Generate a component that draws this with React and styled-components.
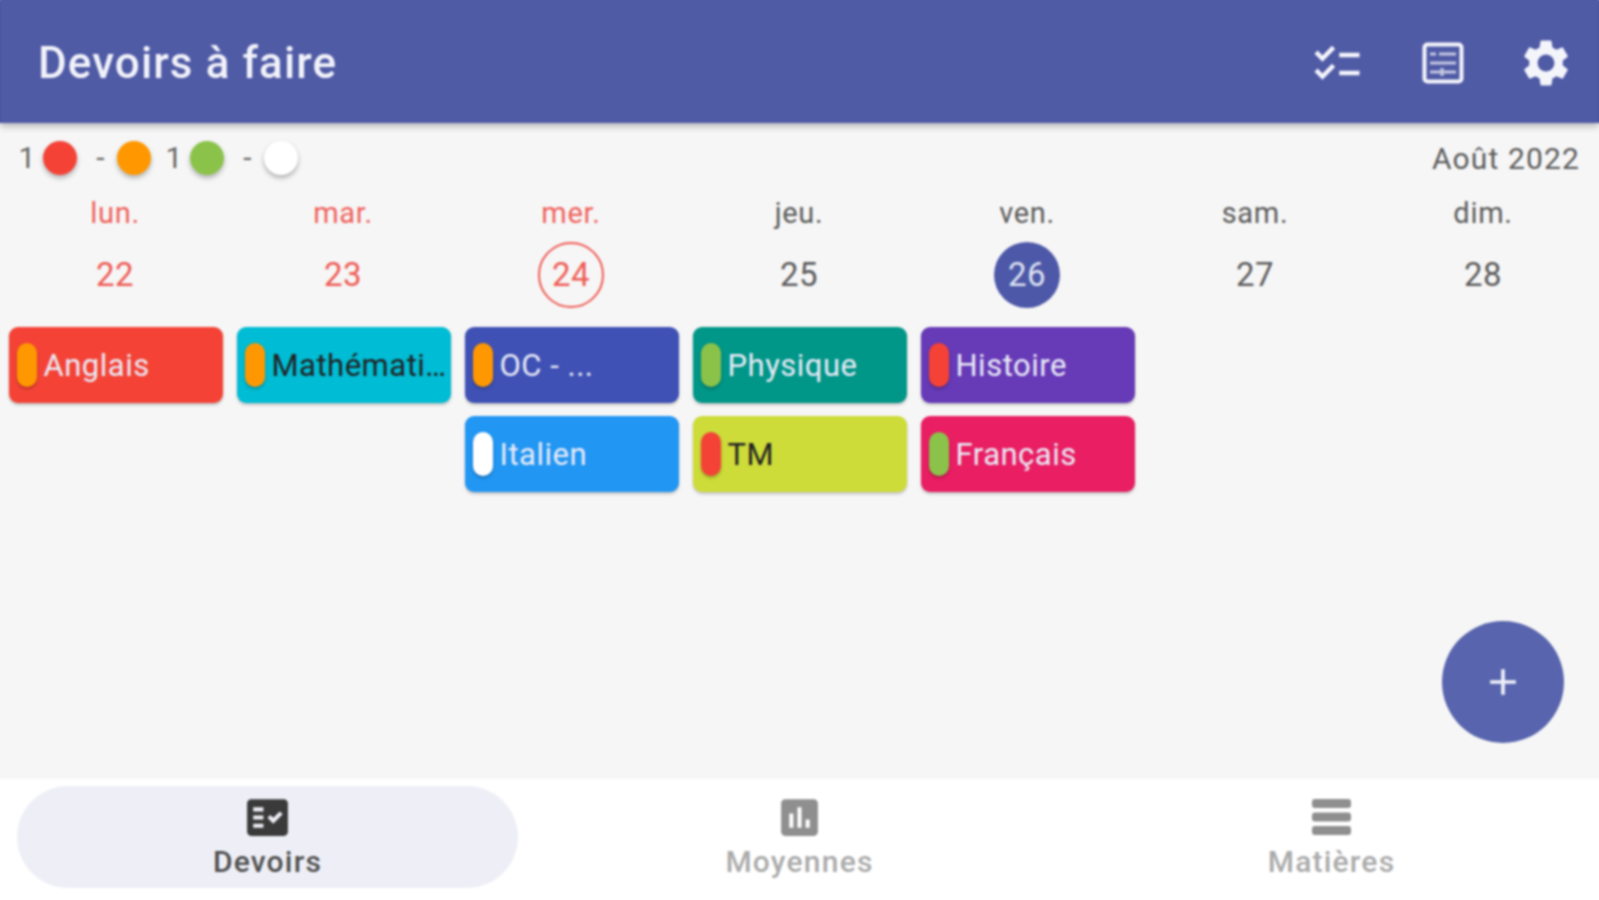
import React from "react";
import styled, { createGlobalStyle } from "styled-components";
import { MdChecklist, MdSettings, MdFactCheck, MdAssessment, MdAdd } from "react-icons/md";

const Global = createGlobalStyle`
  html, body { margin: 0; padding: 0; background: #f6f6f6; }
  body { font-family: Roboto, "Noto Sans", sans-serif; overflow: hidden; height: 900px; }
`;

const Page = styled.div`
  width: 1599px; height: 900px; display: flex; flex-direction: column;
  background: #f6f6f6; filter: blur(0.9px);
`;
const Header = styled.header`
  height: 123px; flex: none; background: #505ba6; display: flex; align-items: center;
  padding: 2px 2px 0 38px; box-sizing: border-box; position: relative; z-index: 2;
  box-shadow: 0 3px 7px rgba(0,0,0,.28), 0 -10px 0 #505ba6, -10px 0 0 #505ba6, 10px 0 0 #505ba6;
`;
const Title = styled.h1`
  margin: 0 auto 0 0; color: #f1f2f9; font-size: 44px; font-weight: 500; letter-spacing: 1.1px;
`;
const IconButton = styled.div`
  width: 103px; display: flex; justify-content: center; align-items: center; color: #f4f5fb;
`;
const Content = styled.main`
  flex: 1; min-height: 0; position: relative; display: flex; flex-direction: column;
`;
const TopRow = styled.div`
  height: 66px; display: flex; align-items: center; justify-content: space-between;
  padding: 4px 19px 0 12px; box-sizing: border-box; flex: none;
`;
const Legend = styled.div` display: flex; `;
const Counter = styled.div` width: 73.5px; display: flex; align-items: center; `;
const Count = styled.span`
  width: 30px; text-align: center; color: #666; font-size: 30px; line-height: 34px;
`;
const Dot = styled.span`
  width: 34px; height: 34px; border-radius: 50%; margin-left: 1px; background: ${p => p.$c};
  box-shadow: 0 3px 5px rgba(0,0,0,.28);
`;
const Month = styled.div` color: #5c5c5c; font-size: 30px; letter-spacing: 1.15px; `;
const Week = styled.div`
  display: grid; grid-template-columns: repeat(7, 228px); padding-left: 1px;
`;
const Day = styled.div` display: flex; flex-direction: column; align-items: center; `;
const DayName = styled.div`
  height: 48px; padding-top: 1px; box-sizing: border-box; font-size: 29px; line-height: 46px;
  letter-spacing: .7px; color: ${p => p.$past ? "#f0625c" : "#5c5c5c"};
`;
const DateMark = styled.div`
  width: 66px; height: 66px; margin-top: 5px; padding-bottom: 2px; border-radius: 50%; box-sizing: border-box;
  display: flex; align-items: center; justify-content: center; font-size: 33px; letter-spacing: .5px;
  color: ${p => p.$selected ? "#dfe2f2" : p.$past ? "#ef5b55" : "#5c5c5c"};
  background: ${p => p.$selected ? "#4d59a8" : "transparent"};
  border: ${p => p.$today ? "2px solid #ef5b55" : "none"};
`;
const Chips = styled.div`
  width: 100%; padding: 19px 6px 0 7.5px; box-sizing: border-box;
  display: flex; flex-direction: column; gap: 13px;
`;
const Chip = styled.div`
  height: 76px; box-sizing: border-box; border-radius: 9px; background: ${p => p.$c};
  box-shadow: 0 2px 3px rgba(0,0,0,.22); display: flex; align-items: center; padding: 0 0 0 8px;
  color: ${p => p.$dark ? "#222" : "#e9ebf7"}; font-size: 31px; letter-spacing: .5px;
  overflow: hidden; white-space: nowrap;
`;
const Pill = styled.span`
  width: 20px; height: 44px; border-radius: 10px; flex: none; margin-right: 7px; background: ${p => p.$c};
  box-shadow: 0 2px 3px rgba(0,0,0,.25);
`;
const Fab = styled.button`
  position: absolute; right: 35px; bottom: 36px; width: 122px; height: 122px; border-radius: 50%;
  border: none; padding: 0; background: #5865ae; color: #f0f1f9;
  display: flex; align-items: center; justify-content: center;
`;
const Nav = styled.nav`
  height: 121px; flex: none; background: #fff; display: grid; grid-template-columns: repeat(3, 532px);
  box-shadow: 0 10px 0 #fff, -10px 0 0 #fff, 10px 0 0 #fff;
`;
const Tab = styled.div`
  margin: 7px 14px 12px 17px; border-radius: 51px; display: flex; flex-direction: column; align-items: center;
  background: ${p => p.$active ? "#eeeff6" : "transparent"};
  color: ${p => p.$active ? "#505050" : "#ababab"};
`;
const TabIcon = styled.div`
  height: 54px; margin-top: 4px; display: flex; align-items: center; justify-content: center;
  color: ${p => p.$active ? "#3a3a3a" : "#8f8f8f"};
`;
const TabLabel = styled.div`
  font-size: 30px; font-weight: 500; line-height: 34px; margin-top: 1px; letter-spacing: 1.2px;
`;

const TableIcon = () => (
  <svg width="42" height="42" viewBox="0 0 42 42" fill="none" stroke="currentColor">
    <rect x="2.5" y="2.5" width="37" height="37" rx="3" strokeWidth="4" />
    <path d="M8 12h6M17 12h17M8 21h26M8 30h26M20 26v8" strokeWidth="3.2" opacity=".7" />
  </svg>
);
const BarsIcon = () => (
  <svg width="39" height="38" viewBox="0 0 39 38" fill="currentColor">
    <rect x="0" y="1" width="39" height="9" rx="3" />
    <rect x="0" y="14.5" width="39" height="9" rx="3" />
    <rect x="0" y="28" width="39" height="9" rx="3" />
  </svg>
);
const ChecklistGlyph = styled(MdChecklist)` margin-left: -6px; margin-top: 2px; `;

const R = "#f44336", O = "#ff9800", G = "#8bc34a", W = "#ffffff";
const days = [
  { name: "lun.", num: 22, past: true, chips: [{ t: "Anglais", c: "#f44336", p: O }] },
  { name: "mar.", num: 23, past: true, chips: [{ t: "Mathémati…", c: "#00bcd4", p: O, dark: true }] },
  { name: "mer.", num: 24, past: true, today: true, chips: [{ t: "OC - ...", c: "#3f51b5", p: O }, { t: "Italien", c: "#2196f3", p: W }] },
  { name: "jeu.", num: 25, chips: [{ t: "Physique", c: "#009688", p: G }, { t: "TM", c: "#cddc39", p: R, dark: true }] },
  { name: "ven.", num: 26, selected: true, chips: [{ t: "Histoire", c: "#673ab7", p: R }, { t: "Français", c: "#e91e63", p: G }] },
  { name: "sam.", num: 27, chips: [] },
  { name: "dim.", num: 28, chips: [] },
];
const legend = [["1", R], ["-", O], ["1", G], ["-", W]];

export default function App() {
  return (
    <Page>
      <Global />
      <Header>
        <Title>Devoirs à faire</Title>
        <IconButton><ChecklistGlyph size={54} /></IconButton>
        <IconButton><TableIcon /></IconButton>
        <IconButton><MdSettings size={56} /></IconButton>
      </Header>
      <Content>
        <TopRow>
          <Legend>
            {legend.map(([n, c], i) => (
              <Counter key={i}><Count>{n}</Count><Dot $c={c} /></Counter>
            ))}
          </Legend>
          <Month>Août 2022</Month>
        </TopRow>
        <Week>
          {days.map(d => (
            <Day key={d.num}>
              <DayName $past={d.past}>{d.name}</DayName>
              <DateMark $past={d.past} $today={d.today} $selected={d.selected}>{d.num}</DateMark>
              <Chips>
                {d.chips.map(ch => (
                  <Chip key={ch.t} $c={ch.c} $dark={ch.dark}><Pill $c={ch.p} />{ch.t}</Chip>
                ))}
              </Chips>
            </Day>
          ))}
        </Week>
        <Fab aria-label="Ajouter"><MdAdd size={44} /></Fab>
      </Content>
      <Nav>
        <Tab $active><TabIcon $active><MdFactCheck size={49} /></TabIcon><TabLabel>Devoirs</TabLabel></Tab>
        <Tab><TabIcon><MdAssessment size={49} /></TabIcon><TabLabel>Moyennes</TabLabel></Tab>
        <Tab><TabIcon><BarsIcon /></TabIcon><TabLabel>Matières</TabLabel></Tab>
      </Nav>
    </Page>
  );
}
